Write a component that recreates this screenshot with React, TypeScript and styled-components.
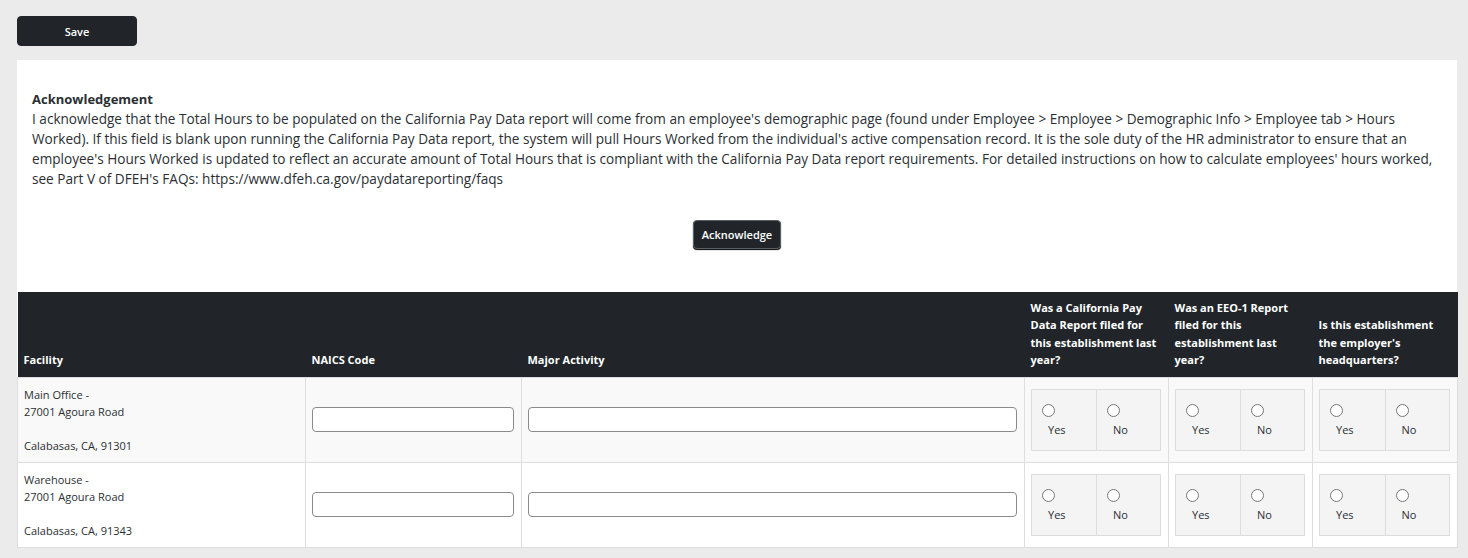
import React from 'react';
import styled, { createGlobalStyle } from 'styled-components';

const GlobalStyle = createGlobalStyle`
    body {
        margin: 0;
        background: #ebebeb;
        font-family: 'Open Sans', 'Liberation Sans', sans-serif;
        color: #212529;
    }
`;

const Page = styled.div`
    padding: 16px 11px 10px 17px;
`;

const DarkButton = styled.button<{ $bordered?: boolean }>`
    background: #212529;
    color: #fff;
    font-family: inherit;
    font-size: 11px;
    font-weight: 600;
    border-radius: 4px;
    cursor: pointer;
    border: ${(p) => (p.$bordered ? '1px solid #5a6068' : '1px solid #212529')};
    box-shadow: ${(p) => (p.$bordered ? '0 1px 1px #000' : 'none')};
`;

const SaveButton = styled(DarkButton)`
    width: 120px;
    height: 30px;
`;

const Panel = styled.section`
    margin-top: 14px;
    background: #fff;
`;

const Notice = styled.div`
    padding: 29px 15px 43px 15px;
    font-size: 13.6px;
    line-height: 20px;
    color: #2b2f33;
`;

const NoticeTitle = styled.div`
    font-weight: 700;
    font-size: 13px;
`;

const Centered = styled.div`
    display: flex;
    justify-content: center;
    margin-top: 31px;
`;

const AckButton = styled(DarkButton)`
    height: 29px;
    padding: 0 8px;
`;

const Table = styled.table`
    width: 100%;
    table-layout: fixed;
    border-collapse: collapse;
    font-size: 11px;
`;

const Th = styled.th<{ $w: number }>`
    box-sizing: border-box;
    width: ${(p) => p.$w}px;
    background: #212529;
    color: #fff;
    font-weight: 700;
    text-align: left;
    vertical-align: bottom;
    padding: 6px 6px 8px 6px;
    line-height: 17.5px;
    height: 85px;
`;

const Row = styled.tr<{ $striped?: boolean }>`
    background: ${(p) => (p.$striped ? '#f9f9f9' : '#fff')};
`;

const Td = styled.td`
    border: 1px solid #dedede;
    padding: 6px 7px 6px 6px;
    vertical-align: middle;
    line-height: 17px;
    color: #2b2f33;
    height: 72px;
`;

const Address = styled.div`
    display: flex;
    flex-direction: column;
`;

const TextInput = styled.input`
    width: 100%;
    box-sizing: border-box;
    height: 25px;
    border: 1px solid #8a8a8a;
    border-radius: 4px;
    background: #fff;
`;

const RadioGroup = styled.div`
    display: grid;
    grid-template-columns: 1fr 1fr;
    border: 1px solid #dddddd;
    background: #f4f4f4;
    height: 60px;
`;

const RadioOption = styled.label`
    display: flex;
    flex-direction: column;
    align-items: flex-start;
    padding: 14px 10px 0 10px;
    gap: 4px;
    & + & {
        border-left: 1px solid #dddddd;
    }
    span {
        padding-left: 6px;
    }
`;

const Radio = styled.input`
    width: 13px;
    height: 13px;
    margin: 0;
`;

const facilities = [
    { name: 'Main Office -', street: '27001 Agoura Road', city: 'Calabasas, CA, 91301' },
    { name: 'Warehouse -', street: '27001 Agoura Road', city: 'Calabasas, CA, 91343' },
];

function YesNo({ name }: { name: string }) {
    return (
        <RadioGroup>
            <RadioOption>
                <Radio type="radio" name={name} />
                <span>Yes</span>
            </RadioOption>
            <RadioOption>
                <Radio type="radio" name={name} />
                <span>No</span>
            </RadioOption>
        </RadioGroup>
    );
}

export default function App() {
    return (
        <>
            <GlobalStyle />
            <Page>
                <SaveButton>Save</SaveButton>
                <Panel>
                    <Notice>
                        <NoticeTitle>Acknowledgement</NoticeTitle>
                        I acknowledge that the Total Hours to be populated on the California Pay Data report will
                        come from an employee's demographic page (found under Employee &gt; Employee &gt; Demographic
                        Info &gt; Employee tab &gt; Hours Worked). If this field is blank upon running the California
                        Pay Data report, the system will pull Hours Worked from the individual's active compensation
                        record. It is the sole duty of the HR administrator to ensure that an employee's Hours Worked
                        is updated to reflect an accurate amount of Total Hours that is compliant with the California
                        Pay Data report requirements. For detailed instructions on how to calculate employees' hours
                        worked, see Part V of DFEH's FAQs: https://www.dfeh.ca.gov/paydatareporting/faqs
                        <Centered>
                            <AckButton $bordered>Acknowledge</AckButton>
                        </Centered>
                    </Notice>
                    <Table>
                        <thead>
                            <tr>
                                <Th $w={288}>Facility</Th>
                                <Th $w={216}>NAICS Code</Th>
                                <Th $w={503}>Major Activity</Th>
                                <Th $w={144}>Was a California Pay Data Report filed for this establishment last year?</Th>
                                <Th $w={144}>Was an EEO-1 Report filed for this establishment last year?</Th>
                                <Th $w={145}>Is this establishment the employer's headquarters?</Th>
                            </tr>
                        </thead>
                        <tbody>
                            {facilities.map((f, i) => (
                                <Row key={i} $striped={i % 2 === 0}>
                                    <Td>
                                        <Address>
                                            <span>{f.name}</span>
                                            <span>{f.street}</span>
                                            <br />
                                            <span>{f.city}</span>
                                        </Address>
                                    </Td>
                                    <Td>
                                        <TextInput />
                                    </Td>
                                    <Td>
                                        <TextInput />
                                    </Td>
                                    <Td>
                                        <YesNo name={`pay-${i}`} />
                                    </Td>
                                    <Td>
                                        <YesNo name={`eeo-${i}`} />
                                    </Td>
                                    <Td>
                                        <YesNo name={`hq-${i}`} />
                                    </Td>
                                </Row>
                            ))}
                        </tbody>
                    </Table>
                </Panel>
            </Page>
        </>
    );
}
